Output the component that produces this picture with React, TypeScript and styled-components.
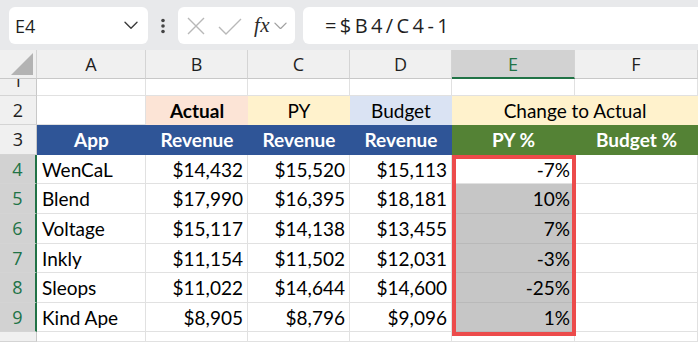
import React from "react";
import styled, { createGlobalStyle } from "styled-components";

const GlobalStyle = createGlobalStyle`
  html, body {
    margin: 0;
    padding: 0;
    background: #ffffff;
  }
  body {
    width: 698px;
    height: 342px;
    overflow: hidden;
  }
`;

const excelGreen = "#217346";

const Page = styled.div`
  width: 698px;
  height: 342px;
  overflow: hidden;
  display: flex;
  flex-direction: column;
`;

const Toolbar = styled.div`
  height: 55px;
  box-sizing: border-box;
  padding: 7px 0 0 9px;
  display: flex;
  align-items: flex-start;
  background: #e8e9eb;
  font-family: "Open Sans", "Noto Sans", sans-serif;
  color: #1f1f1f;
`;

const Box = styled.div`
  height: 37px;
  box-sizing: border-box;
  background: #ffffff;
  border-radius: 6px;
  display: flex;
  align-items: center;
`;

const NameBox = styled(Box)`
  width: 139px;
  padding: 0 10px 0 6px;
  justify-content: space-between;
  font-size: 18px;
`;

const Dots = styled.div`
  width: 30px;
  height: 37px;
  display: flex;
  align-items: center;
  justify-content: center;
`;

const FuncBox = styled(Box)`
  width: 117px;
  padding-left: 8px;
`;

const Fx = styled.span`
  font-family: "Liberation Serif", "DejaVu Serif", serif;
  font-style: italic;
  font-size: 21px;
  color: #2b2b2b;
  margin: 0 4px 0 11px;
  letter-spacing: 0.5px;
`;

const FormulaBox = styled(Box)`
  flex: 1;
  margin-left: 8px;
  border-radius: 6px 0 0 6px;
  padding-left: 22px;
  font-size: 20px;
  letter-spacing: 3.4px;
  color: #1f1f1f;
`;

const Grid = styled.div`
  position: relative;
  display: grid;
  grid-template-columns: 37px 109px 102px 102px 102px 123px 123px;
  grid-template-rows: 29px 17px 29px 30px 29px 30px 30px 29px 30px 29px 10px;
  font-family: Lato, "Open Sans", sans-serif;
  font-size: 19px;
  color: #000000;
`;

const Corner = styled.div`
  background: #f0f0f0;
  border-right: 1px solid #d4d4d4;
  border-bottom: 1px solid #c8c8c8;
  box-sizing: border-box;
  display: flex;
  align-items: flex-end;
  justify-content: flex-end;
  padding: 0 3px 3px 0;
`;

const ColHead = styled.div<{ $selected?: boolean }>`
  box-sizing: border-box;
  background: ${(p) => (p.$selected ? "#d2d2d2" : "#f0f0f0")};
  color: ${(p) => (p.$selected ? excelGreen : "#1f1f1f")};
  border-right: 1px solid #d4d4d4;
  border-bottom: ${(p) => (p.$selected ? `2px solid ${excelGreen}` : "1px solid #c8c8c8")};
  display: flex;
  align-items: center;
  justify-content: center;
  font-family: "Open Sans", "Noto Sans", sans-serif;
  font-size: 18px;
`;

const RowHead = styled.div<{ $selected?: boolean; $clip?: boolean }>`
  box-sizing: border-box;
  background: ${(p) => (p.$selected ? "#d2d2d2" : "#f0f0f0")};
  color: ${(p) => (p.$selected ? excelGreen : "#1f1f1f")};
  border-right: ${(p) => (p.$selected ? `2px solid ${excelGreen}` : "1px solid #c8c8c8")};
  border-bottom: 1px solid #d4d4d4;
  display: flex;
  align-items: ${(p) => (p.$clip ? "flex-end" : "center")};
  justify-content: center;
  overflow: hidden;
  font-family: "Open Sans", "Noto Sans", sans-serif;
  font-size: 18px;
  line-height: 29px;
`;

const Cell = styled.div<{
  $fill?: string;
  $line?: string;
  $align?: "left" | "right" | "center";
  $bold?: boolean;
  $color?: string;
  $span?: number;
}>`
  box-sizing: border-box;
  grid-column: ${(p) => (p.$span ? `span ${p.$span}` : "auto")};
  background: ${(p) => p.$fill || "#ffffff"};
  color: ${(p) => p.$color || "#000000"};
  font-weight: ${(p) => (p.$bold ? 700 : 400)};
  border-right: 1px solid ${(p) => p.$line || p.$fill || "#e1e1e1"};
  border-bottom: 1px solid ${(p) => p.$line || p.$fill || "#e1e1e1"};
  display: flex;
  align-items: center;
  justify-content: ${(p) =>
    p.$align === "right" ? "flex-end" : p.$align === "center" ? "center" : "flex-start"};
  padding: 0 4px 0 5px;
  white-space: nowrap;
  overflow: hidden;
`;

/* annotation drawn over E4:E9 — absolute child whose containing block is that grid area */
const Highlight = styled.div`
  position: absolute;
  grid-column: 6 / 7;
  grid-row: 5 / 11;
  top: 0;
  left: 0;
  right: -1px;
  bottom: -4px;
  border: 4px solid #ec4b4b;
  pointer-events: none;
  z-index: 2;
`;

const ChevronDown = ({ color = "#444", size = 14 }: { color?: string; size?: number }) => (
  <svg width={size} height={size * 0.6} viewBox="0 0 14 8" fill="none">
    <path d="M1 1 L7 7 L13 1" stroke={color} strokeWidth="1.4" strokeLinecap="round" strokeLinejoin="round" />
  </svg>
);

const rows = [
  ["WenCaL", "$14,432", "$15,520", "$15,113", "-7%"],
  ["Blend", "$17,990", "$16,395", "$18,181", "10%"],
  ["Voltage", "$15,117", "$14,138", "$13,455", "7%"],
  ["Inkly", "$11,154", "$11,502", "$12,031", "-3%"],
  ["Sleops", "$11,022", "$14,644", "$14,600", "-25%"],
  ["Kind Ape", "$8,905", "$8,796", "$9,096", "1%"],
];

const blue = "#2f5597";
const green = "#548235";

export default function App() {
  return (
    <Page>
      <GlobalStyle />
      <Toolbar>
        <NameBox>
          <span>E4</span>
          <ChevronDown color="#3a3a3a" size={14} />
        </NameBox>
        <Dots>
          <svg width="6" height="16" viewBox="0 0 6 16">
            <circle cx="3" cy="2.5" r="1.8" fill="#444" />
            <circle cx="3" cy="8" r="1.8" fill="#444" />
            <circle cx="3" cy="13.5" r="1.8" fill="#444" />
          </svg>
        </Dots>
        <FuncBox>
          <svg width="20" height="20" viewBox="0 0 20 20">
            <path d="M2 2 L18 18 M18 2 L2 18" stroke="#b8b8b8" strokeWidth="1.4" />
          </svg>
          <svg width="26" height="20" viewBox="0 0 26 20" style={{ marginLeft: 11 }}>
            <path d="M2 11 L9 18 L24 3" stroke="#b8b8b8" strokeWidth="1.4" fill="none" />
          </svg>
          <Fx>fx</Fx>
          <ChevronDown color="#a0a0a0" size={13} />
        </FuncBox>
        <FormulaBox>=$B4/C4-1</FormulaBox>
      </Toolbar>
      <Grid>
        <Corner>
          <svg width="22" height="22" viewBox="0 0 22 22">
            <polygon points="22,0 22,22 0,22" fill="#b3b3b3" />
          </svg>
        </Corner>
        {["A", "B", "C", "D", "E", "F"].map((c) => (
          <ColHead key={c} $selected={c === "E"}>
            {c}
          </ColHead>
        ))}

        <RowHead $clip>1</RowHead>
        {Array.from({ length: 6 }).map((_, i) => (
          <Cell key={`r1-${i}`} />
        ))}

        <RowHead>2</RowHead>
        <Cell />
        <Cell $fill="#fce4d6" $align="center" $bold>
          Actual
        </Cell>
        <Cell $fill="#fff2cc" $align="center">
          PY
        </Cell>
        <Cell $fill="#dae3f3" $align="center">
          Budget
        </Cell>
        <Cell $fill="#fff2cc" $align="center" $span={2}>
          Change to Actual
        </Cell>

        <RowHead>3</RowHead>
        <Cell $fill={blue} $color="#ffffff" $bold $align="center">
          App
        </Cell>
        <Cell $fill={blue} $color="#ffffff" $bold $align="center">
          Revenue
        </Cell>
        <Cell $fill={blue} $color="#ffffff" $bold $align="center">
          Revenue
        </Cell>
        <Cell $fill={blue} $color="#ffffff" $bold $align="center">
          Revenue
        </Cell>
        <Cell $fill={green} $color="#ffffff" $bold $align="center">
          PY %
        </Cell>
        <Cell $fill={green} $color="#ffffff" $bold $align="center">
          Budget %
        </Cell>

        {rows.map((r, i) => (
          <React.Fragment key={r[0]}>
            <RowHead $selected>{i + 4}</RowHead>
            <Cell>{r[0]}</Cell>
            <Cell $align="right">{r[1]}</Cell>
            <Cell $align="right">{r[2]}</Cell>
            <Cell $align="right">{r[3]}</Cell>
            <Cell
              $align="right"
              $fill={i === 0 ? undefined : "#c6c6c6"}
              $line={i === 0 ? undefined : "#b9b9b9"}
            >
              {r[4]}
            </Cell>
            <Cell />
          </React.Fragment>
        ))}

        <RowHead />
        {Array.from({ length: 6 }).map((_, i) => (
          <Cell key={`r10-${i}`} />
        ))}

        <Highlight />
      </Grid>
    </Page>
  );
}
